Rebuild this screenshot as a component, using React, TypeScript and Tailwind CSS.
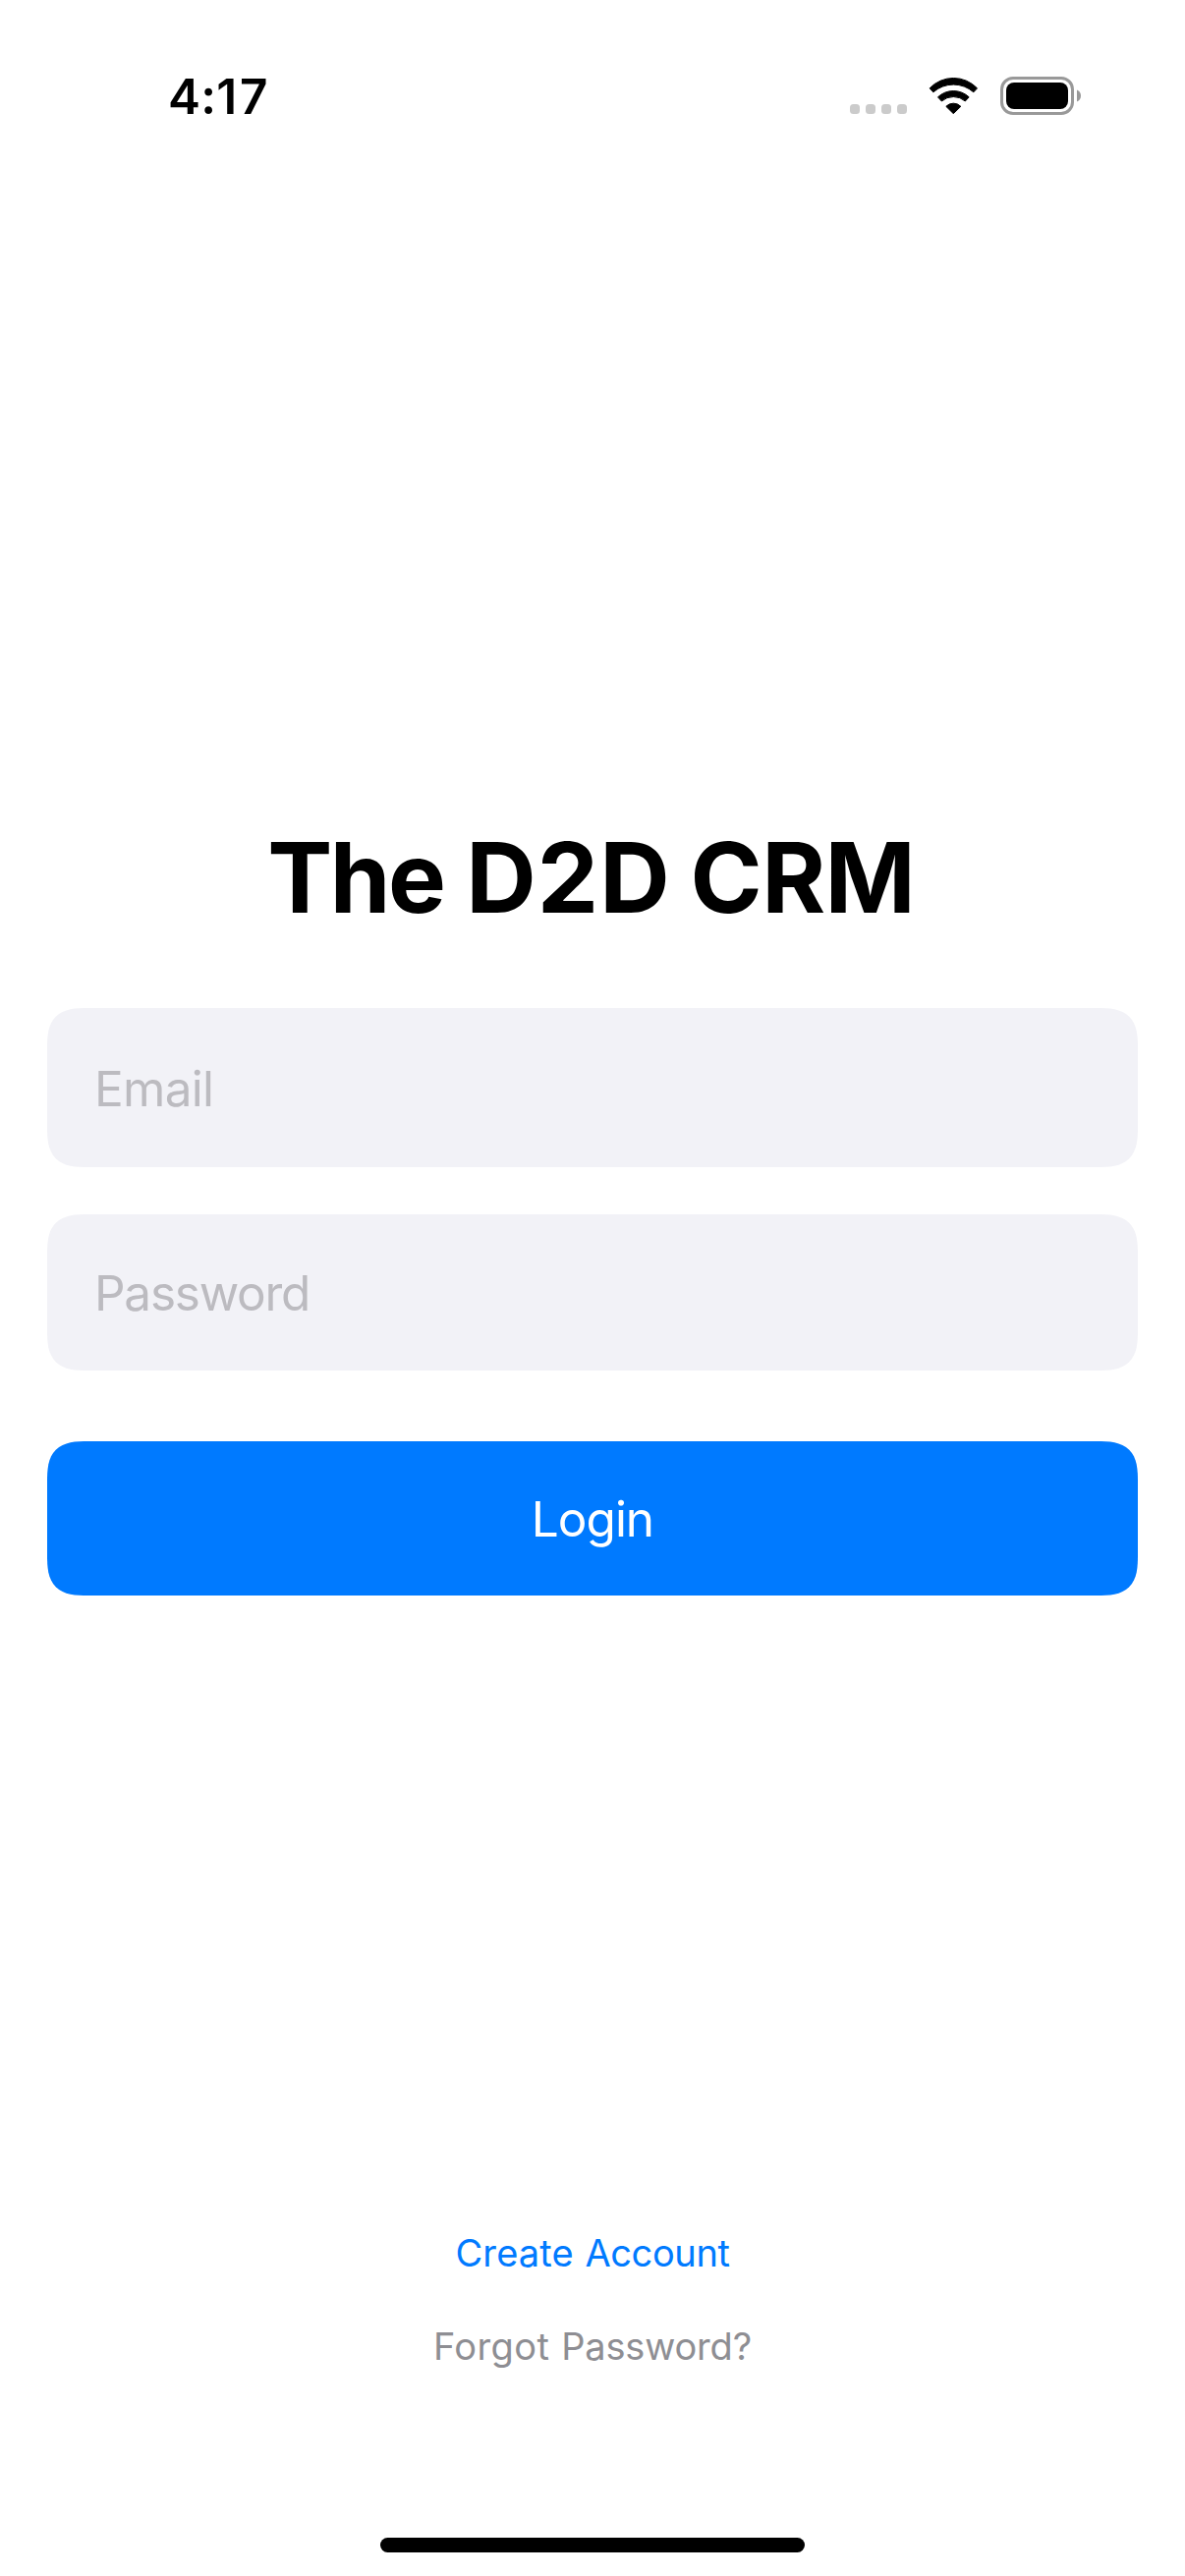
function SignalDots() {
  return (
    <div className="mt-[28px] flex gap-[6px]">
      <span className="size-[10px] rounded-[3.5px] bg-[#cbcbcb]" />
      <span className="size-[10px] rounded-[3.5px] bg-[#cbcbcb]" />
      <span className="size-[10px] rounded-[3.5px] bg-[#cbcbcb]" />
      <span className="size-[10px] rounded-[3.5px] bg-[#cbcbcb]" />
    </div>
  );
}

function WifiIcon() {
  return (
    <svg
      className="ml-[22px] mt-[1px] h-[37px] w-[51px]"
      viewBox="-1 0 153 111"
      fill="#000"
      stroke="#000"
      strokeWidth="3"
      strokeLinejoin="round"
    >
      <path d="M2.5 32.5A100 100 0 0 1 147.5 32.5L136.5 44.5A93 93 0 0 0 13.5 44.5Z" />
      <path d="M27.5 59.5A69 69 0 0 1 122.5 59.5L111 72A55 55 0 0 0 39 72Z" />
      <path d="M52.5 88A31.4 31.4 0 0 1 97.5 88L75 110Z" />
    </svg>
  );
}

function BatteryIcon() {
  return (
    <svg className="ml-[22px] h-[39px] w-[83px]" viewBox="0 0 83 39">
      <rect x="1.5" y="1.5" width="72" height="36" rx="11.5" fill="none" stroke="#999" strokeWidth="3" />
      <rect x="6" y="6" width="63" height="27" rx="8" fill="#000" />
      <path d="M78 13.5C80.5 14.5 82 16.8 82 19.5S80.5 24.5 78 25.5Z" fill="#999" />
    </svg>
  );
}

export default function App() {
  return (
    <div className="flex h-[2622px] w-[1206px] flex-col bg-white font-['Inter',sans-serif] text-black">
      <header className="flex h-[177px] items-start justify-between pl-[171px] pr-[105px]">
        <span className="mt-[67px] text-[49.5px] font-semibold leading-[62px] tracking-[0.2px]">
          4:<span className="tracking-[2.8px]">17</span>
        </span>
        <div className="mt-[78px] flex items-start">
          <SignalDots />
          <WifiIcon />
          <BatteryIcon />
        </div>
      </header>

      <main className="flex flex-1 flex-col px-[48px] pt-[656px]">
        <h1 className="pr-[2.5px] text-center text-[99px] font-bold leading-[120px]">
          <span className="tracking-[-2.5px]">The</span>{" "}
          <span className="-ml-[0.6px] tracking-[1px]">D2D</span>{" "}
          <span className="-ml-[3.6px] tracking-[-0.6px]">CRM</span>
        </h1>

        <div className="mt-[73px] flex h-[162px] items-center rounded-[42px] bg-[#f2f2f7] pl-[48px] pt-[2px] [corner-shape:superellipse(1.56)]">
          <span className="text-[49.5px] leading-[60px] tracking-[-0.7px] text-[#bcbbc0]">Email</span>
        </div>
        <div className="mt-[48px] flex h-[159px] items-center rounded-[42px] bg-[#f2f2f7] pl-[48px] [corner-shape:superellipse(1.56)]">
          <span className="text-[49.5px] leading-[60px] tracking-[-1.25px] text-[#bcbbc0]">Password</span>
        </div>
        <button className="mt-[72px] flex h-[157px] items-center justify-center rounded-[42px] bg-[#007aff] text-[49.5px] leading-[60px] tracking-[-1px] text-white [corner-shape:superellipse(1.56)]">
          Login
        </button>

        <nav className="mt-[645px] flex flex-col items-center gap-[47px] text-[38px] leading-[48px]">
          <a className="text-[#007aff] [word-spacing:1px]">
            <span className="tracking-[0.13px]">Create</span> <span className="tracking-[-0.39px]">Account</span>
          </a>
          <a className="text-[#8e8e93] [word-spacing:1.2px]">
            <span className="tracking-[0.4px]">Forgot</span> <span className="tracking-[-0.17px]">Password?</span>
          </a>
        </nav>
      </main>

      <footer className="flex h-[39px] justify-center">
        <div className="h-[15px] w-[432px] rounded-full bg-black" />
      </footer>
    </div>
  );
}
